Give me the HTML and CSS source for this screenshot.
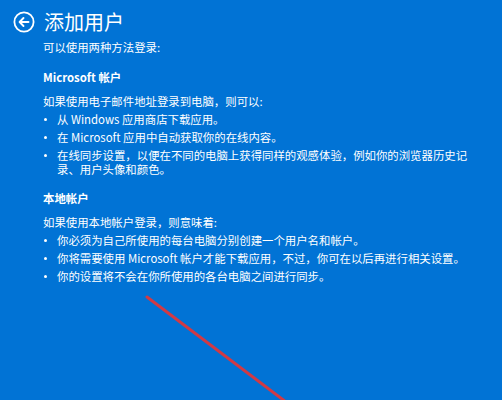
FILE: index.html
```html
<!DOCTYPE html>
<html lang="zh-CN">
<head>
    <meta charset="UTF-8">
    <meta name="viewport" content="width=device-width, initial-scale=1.0">
    <title>添加用户</title>
    <link rel="stylesheet" href="styles.css">
</head>
<body>
    <div class="page">
        <div class="header">
            <svg class="back" width="22" height="22" viewBox="0 0 22 22">
                <circle cx="11" cy="11" r="9.6" fill="none" stroke="#fff" stroke-width="1.8"/>
                <path d="M15.5 11H7M10.5 7L6.6 11l3.9 4" fill="none" stroke="#fff" stroke-width="1.9" stroke-linecap="round" stroke-linejoin="round"/>
            </svg>
            <h1>添加用户</h1>
        </div>
        <div class="content">
            <p class="subtitle">可以使用两种方法登录:</p>

            <h2>Microsoft 帐户</h2>
            <p class="intro">如果使用电子邮件地址登录到电脑，则可以:</p>
            <ul>
                <li>从 Windows 应用商店下载应用。</li>
                <li>在 Microsoft 应用中自动获取你的在线内容。</li>
                <li>在线同步设置，以便在不同的电脑上获得同样的观感体验，例如你的浏览器历史记录、用户头像和颜色。</li>
            </ul>

            <h2 class="second">本地帐户</h2>
            <p class="intro">如果使用本地帐户登录，则意味着:</p>
            <ul>
                <li>你必须为自己所使用的每台电脑分别创建一个用户名和帐户。</li>
                <li>你将需要使用 Microsoft 帐户才能下载应用，不过，你可在以后再进行相关设置。</li>
                <li>你的设置将不会在你所使用的各台电脑之间进行同步。</li>
            </ul>
        </div>
    </div>

    <svg class="mark" width="502" height="400" viewBox="0 0 502 400">
        <line x1="147" y1="297" x2="286" y2="402" stroke="#d03a45" stroke-width="3" stroke-linecap="round"/>
    </svg>
</body>
</html>
```

FILE: styles.css
```css
html, body {
    margin: 0;
    padding: 0;
    height: 100%;
}
body {
    background: #0173d5;
    color: #fff;
    font-family: "Noto Sans CJK SC", "Noto Sans", sans-serif;
    font-size: 11.4px;
    line-height: 14px;
    overflow: hidden;
    position: relative;
}
.page {
    padding: 10px 0 0 13px;
}
.header {
    display: flex;
    align-items: center;
    gap: 9px;
    height: 24px;
}
.back {
    display: block;
}
h1 {
    margin: 0;
    font-size: 20px;
    line-height: 24px;
    font-weight: 400;
}
.content {
    padding-left: 30px;
    width: 430px;
}
p, ul, h2 {
    margin: 0;
}
.subtitle {
    margin-top: 6px;
}
h2 {
    font-size: 11.4px;
    font-weight: 700;
    margin-top: 16px;
}
h2.second {
    margin-top: 15px;
}
.intro {
    margin-top: 10px;
}
ul {
    list-style: none;
    padding: 0;
}
li {
    position: relative;
    padding-left: 14px;
    margin-top: 4px;
}
li::before {
    content: "";
    position: absolute;
    left: 1px;
    top: 6px;
    width: 3px;
    height: 3px;
    border-radius: 50%;
    background: #fff;
}
.mark {
    position: absolute;
    left: 0;
    top: 0;
}
```
